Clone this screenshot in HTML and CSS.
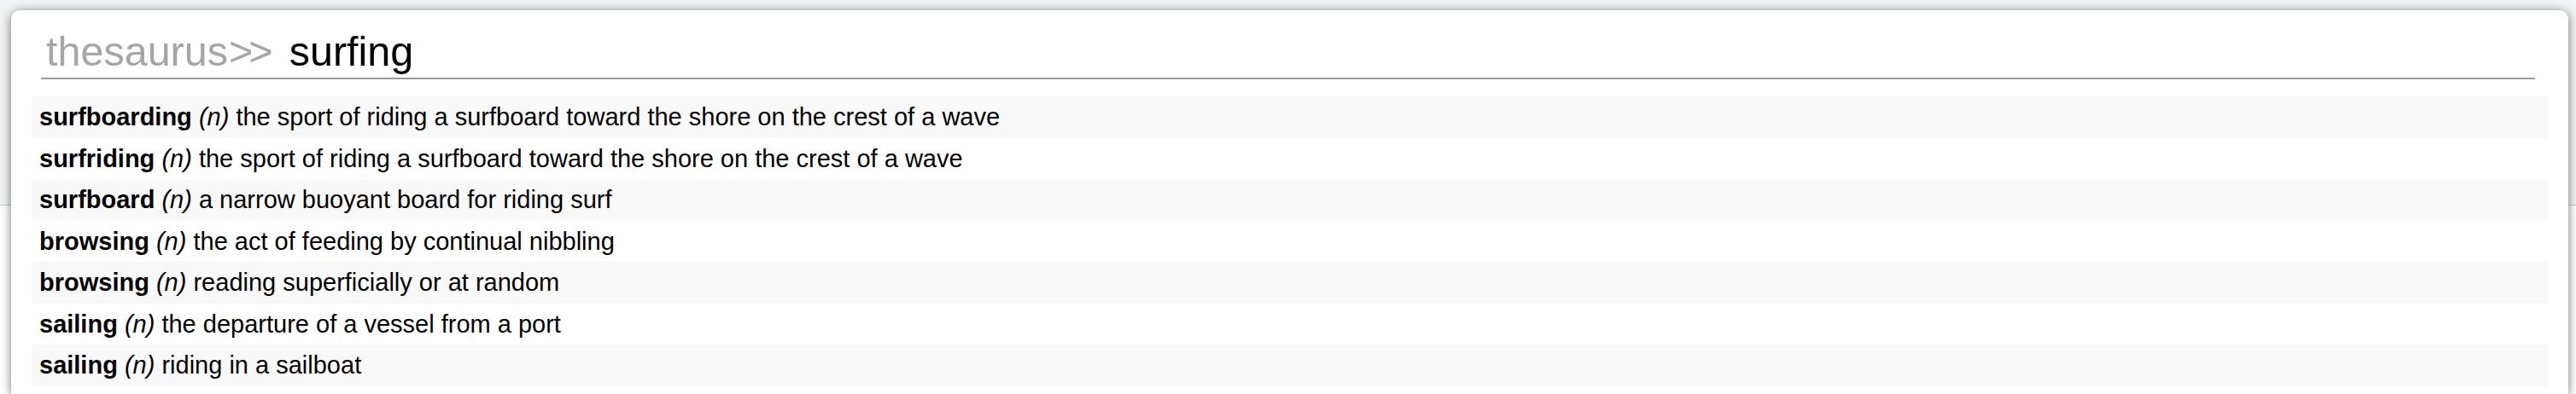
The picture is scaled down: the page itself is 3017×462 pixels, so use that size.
FILE: index.html
```html
<!DOCTYPE html>
<html>
<head>
<meta charset="utf-8">
<link rel="stylesheet" href="styles.css">
</head>
<body>
<div class="card">
  <div class="search">
    <span class="label">thesaurus<span class="arrows">&gt;&gt;</span></span>
    <span class="query">surfing</span>
  </div>
  <ul class="results">
    <li class="row"><b>surfboarding</b> <i>(n)</i> the sport of riding a surfboard toward the shore on the crest of a wave</li>
    <li class="row"><b>surfriding</b> <i>(n)</i> the sport of riding a surfboard toward the shore on the crest of a wave</li>
    <li class="row"><b>surfboard</b> <i>(n)</i> a narrow buoyant board for riding surf</li>
    <li class="row"><b>browsing</b> <i>(n)</i> the act of feeding by continual nibbling</li>
    <li class="row"><b>browsing</b> <i>(n)</i> reading superficially or at random</li>
    <li class="row"><b>sailing</b> <i>(n)</i> the departure of a vessel from a port</li>
    <li class="row"><b>sailing</b> <i>(n)</i> riding in a sailboat</li>
  </ul>
</div>
</body>
</html>
```
FILE: styles.css
```css
html, body {
  margin: 0;
  padding: 0;
  height: 100%;
  overflow: hidden;
}
body {
  background: linear-gradient(to bottom, #f1f3f4 0, #f1f3f4 240px, #c9c9c9 240px, #c9c9c9 241px, #ffffff 241px);
  font-family: "Liberation Sans", Arial, sans-serif;
  padding: 12px 9px 0 13px;
  box-sizing: border-box;
}
.card {
  background: #fff;
  border-radius: 10px 10px 0 0;
  box-shadow: 0 2px 12px rgba(0, 0, 0, 0.55);
  height: 450px;
  padding: 0 24px;
  box-sizing: border-box;
  overflow: hidden;
}
.search {
  margin: 0 15px 0 11px;
  border-bottom: 2px solid #9a9a9a;
  display: flex;
  align-items: flex-end;
  padding: 0 0 7px 6px;
  box-sizing: border-box;
  height: 81px;
  font-size: 48.5px;
  line-height: 1;
}
.label {
  color: #a6a6a6;
  margin-right: 24px;
}
.arrows {
  letter-spacing: -5px;
  margin-left: 1px;
}
.query {
  color: #000;
}
.results {
  list-style: none;
  margin: 20px 0 0;
  padding: 0;
}
.row {
  height: 48.5px;
  line-height: 48.5px;
  padding-left: 9px;
  font-size: 29px;
  color: #000;
}
.row:nth-child(odd) {
  background: #f9f9f9;
}
```
